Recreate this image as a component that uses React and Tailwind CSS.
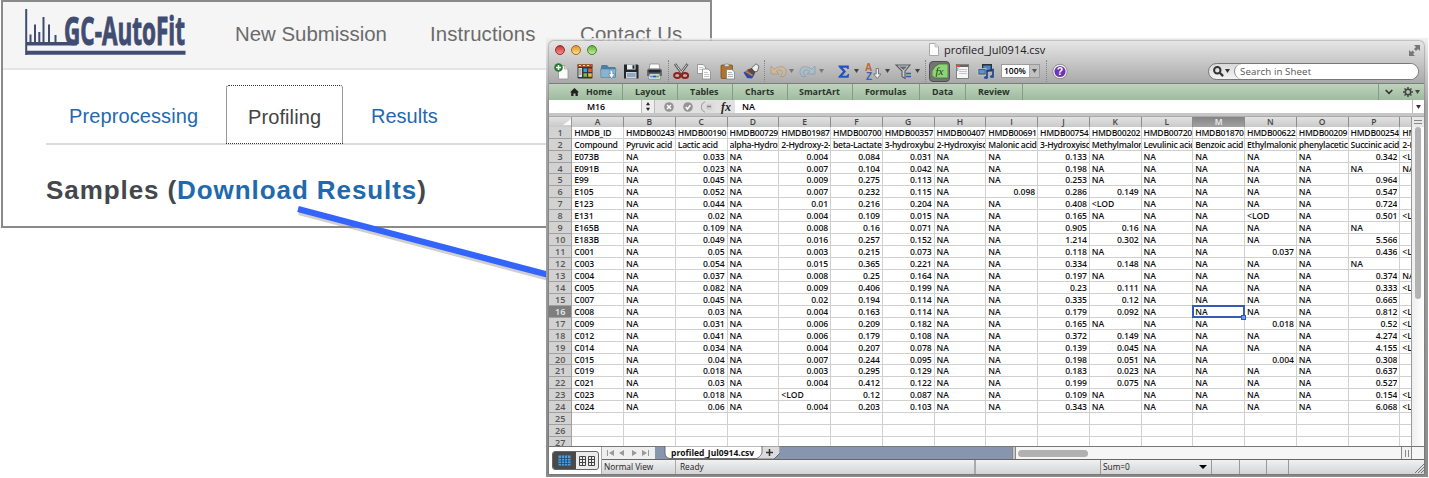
import React from "react";

const COLS = "ABCDEFGHIJKLMNOP".split("");
const IDS = ["HMDB_ID", "HMDB00243", "HMDB00190", "HMDB00729", "HMDB01987", "HMDB00700", "HMDB00357", "HMDB00407", "HMDB00691", "HMDB00754", "HMDB00202", "HMDB00720", "HMDB01870", "HMDB00622", "HMDB00209", "HMDB00254", "HM"];
const NAMES = ["Compound", "Pyruvic acid", "Lactic acid", "alpha-Hydrox", "2-Hydroxy-2-", "beta-Lactate", "3-hydroxybut", "2-Hydroxyisc", "Malonic acid", "3-Hydroxyisc", "Methylmalon", "Levulinic acid", "Benzoic acid", "Ethylmalonic", "phenylacetic", "Succinic acid", "2-H"];

// id, C, E, F, G, I, J, K, N, P, Q
const DATA = `E073B 0.033 0.004 0.084 0.031 NA 0.133 NA NA 0.342 <LOD
E091B 0.023 0.007 0.104 0.042 NA 0.198 NA NA NA NA
E99 0.045 0.009 0.275 0.113 NA 0.253 NA NA 0.964 _
E105 0.052 0.007 0.232 0.115 0.098 0.286 0.149 NA 0.547 _
E123 0.044 0.01 0.216 0.204 NA 0.408 <LOD NA 0.724 _
E131 0.02 0.004 0.109 0.015 NA 0.165 NA <LOD 0.501 <LOD
E165B 0.109 0.008 0.16 0.071 NA 0.905 0.16 NA NA _
E183B 0.049 0.016 0.257 0.152 NA 1.214 0.302 NA 5.566 _
C001 0.05 0.003 0.215 0.073 NA 0.118 NA 0.037 0.436 <LOD
C003 0.054 0.015 0.365 0.221 NA 0.334 0.148 NA NA _
C004 0.037 0.008 0.25 0.164 NA 0.197 NA NA 0.374 NA
C005 0.082 0.009 0.406 0.199 NA 0.23 0.111 NA 0.333 <LOD
C007 0.045 0.02 0.194 0.114 NA 0.335 0.12 NA 0.665 _
C008 0.03 0.004 0.163 0.114 NA 0.179 0.092 NA 0.812 <LOD
C009 0.031 0.006 0.209 0.182 NA 0.165 NA 0.018 0.52 <LOD
C012 0.041 0.006 0.179 0.108 NA 0.372 0.149 NA 4.274 <LOD
C014 0.034 0.004 0.207 0.078 NA 0.139 0.045 NA 4.155 <LOD
C015 0.04 0.007 0.244 0.095 NA 0.198 0.051 0.004 0.308 _
C019 0.018 0.003 0.295 0.129 NA 0.183 0.023 NA 0.637 _
C021 0.03 0.004 0.412 0.122 NA 0.199 0.075 NA 0.527 _
C023 0.018 <LOD 0.12 0.087 NA 0.109 NA NA 0.154 <LOD
C024 0.06 0.004 0.203 0.103 NA 0.343 NA NA 6.068 <LOD`
  .split("\n")
  .map((line) => {
    const [id, c, e, f, g, i, j, k, n, p, q] = line.split(" ");
    return [id, "NA", c, "NA", e, f, g, "NA", i, j, k, "NA", "NA", n, "NA", p, q === "_" ? "" : q];
  });

const EMPTY = Array(17).fill("");
const ROWS = [IDS, NAMES, ...DATA, EMPTY, EMPTY, EMPTY];

function Logo() {
  return (
    <svg className="block h-[50px] w-[166px]" viewBox="22 7 166 50" role="img">
      <g fill="#414c73">
        <path d="M25.2 9h2v46h-2z" />
        <path d="M27 50.800h158.500v4H27z" />
        <path d="M27 42h50v3.500H27z" />
        <path d="M29.500 34.500h2v9h-2zM34 24.500h2v19h-2zM38.300 32h2v11h-2zM42.500 17h2v26h-2zM48 24.500h2v19h-2zM54.500 35h2v9h-2z" />
      </g>
      <text x="64" y="45" textLength="121" lengthAdjust="spacingAndGlyphs" fill="#414c73" stroke="#414c73" strokeWidth="1" fontSize="39" fontWeight="700" fontFamily="'Open Sans', sans-serif">GC-AutoFit</text>
    </svg>
  );
}

function SitePanel() {
  return (
    <div className="absolute left-px top-0 flex h-[228px] w-[711px] flex-col border-2 border-[#8a8a8a] bg-white font-['Liberation_Sans',sans-serif]">
      <header className="flex h-[68px] shrink-0 items-start border-b-2 border-[#e4e4e4] bg-[#f5f5f5] text-[#6b6b6b]">
        <div className="ml-[19px] mt-[5px] w-[166px] shrink-0"><Logo /></div>
        <nav className="mt-[16px] flex whitespace-nowrap pl-[47px] text-[20.4px] leading-[32px]">
          <a className="w-[195px]">New Submission</a>
          <a className="w-[150px] tracking-[0.1px]">Instructions</a>
          <a className="tracking-[0.15px]">Contact Us</a>
        </nav>
      </header>
      <div className="ml-[43px] mt-[15px] flex h-[60px] shrink-0 items-end border-b-2 border-[#dcdcdc] text-[20px] text-[#1f69b0]">
        <a className="h-[58px] w-[180px] pl-[23px] pt-[14px] leading-[34px] tracking-[0.1px]">Preprocessing</a>
        <a className="mb-[-1px] h-[59px] w-[117px] rounded-t-[3px] border border-dotted border-[#333] bg-white pl-[21px] pt-[14px] leading-[34px] tracking-[0.1px] text-[#444]">Profiling</a>
        <a className="h-[58px] pl-[28px] pt-[14px] leading-[34px]">Results</a>
      </div>
      <h1 className="ml-[43px] mt-[27px] whitespace-nowrap text-[26px] font-bold leading-[36px] tracking-[0.92px] text-[#44474b]">
        Samples (<span className="text-[#1f69ae]">Download Results</span>)
      </h1>
    </div>
  );
}

function Caret({ className = "" }) {
  return (
    <svg className={"h-[4px] w-[5px] shrink-0 " + className} viewBox="0 0 5 4"><path d="M0 0h5L2.500 4z" fill="currentColor" /></svg>
  );
}

function Separator({ className = "" }) {
  return <span className={"h-[22px] w-px shrink-0 border-l border-dotted border-[#858585] " + className} />;
}

function Icon({ className = "", children, fade }) {
  return (
    <svg className={"h-[17px] w-[17px] shrink-0 overflow-visible " + className} viewBox="0 0 17 17" opacity={fade ? 0.55 : 1}>{children}</svg>
  );
}

function Toolbar() {
  return (
    <div className="flex h-[26px] items-center text-[#444]">
      <Icon className="ml-[5px]">
        <path d="M4.500 2.500h6l3.500 3.500v10h-9.500z" fill="#fbfbfb" stroke="#909090" strokeWidth=".8" />
        <path d="M10.500 2.500v3.500H14" fill="#ddd" stroke="#999" strokeWidth=".6" />
        <circle cx="4.500" cy="4.500" r="4.300" fill="#277a2d" /><path d="M4.500 2v5M2 4.500h5" stroke="#fff" strokeWidth="1.600" />
      </Icon>
      <Icon className="ml-[6px]">
        <rect x=".5" y="1" width="15" height="14.500" rx="1" fill="#34383c" />
        <rect x=".5" y="1" width="15" height="3" fill="#9b5a33" /><path d="M2 2.500h2M6 2.500h2M10 2.500h2" stroke="#f4d9a4" />
        <path d="M1.500 5h3.500v9H1.500z" fill="#d9dde0" /><path d="M2 7h2.500M2 9h2.500M2 11h2.500" stroke="#666" strokeWidth=".7" />
        <path d="M6.500 5.500h3.500v3.500H6.500z" fill="#27a5ee" /><path d="M11.200 5.500h3.500v3.500h-3.500z" fill="#ef5b2a" /><path d="M6.500 10.300h3.500v3.500H6.500z" fill="#70c43c" /><path d="M11.200 10.300h3.500v3.500h-3.500z" fill="#f0be31" />
      </Icon>
      <Icon className="ml-[6px]">
        <path d="M1 14V3l1-1h5l1.500 2H15l.8 1v9z" fill="#4c7fa3" /><path d="M.5 6h15.500l-.8 8.500H1z" fill="#87b4d2" stroke="#4d7c9c" strokeWidth=".6" />
        <path d="M9.500 7c3 0 3.500 2 3.300 4h2L11.500 15.500 8.500 11h1.800c0-1.500 0-3-.8-4z" fill="#f7f9fb" stroke="#4d708a" strokeWidth=".5" />
      </Icon>
      <Icon className="ml-[6px]">
        <path d="M1 1.500h13.500l1 1v13H1z" fill="#23272b" /><path d="M4 1.500h8.500v5H4z" fill="#e8edf0" /><path d="M9.500 2.300h2v3.500h-2z" fill="#24282c" /><path d="M3 9h10.500v6.500H3z" fill="#c5d5e4" /><path d="M4 11h8.500M4 13h8.500" stroke="#65788b" />
      </Icon>
      <Icon className="ml-[6px]">
        <path d="M4 1h9l1 6H3z" fill="#fafafa" stroke="#777" strokeWidth=".6" /><path d="M1 7l2-1.500h11L16 7v6H1z" fill="#66696d" /><path d="M2.500 7h12v2.500h-12z" fill="#25272a" />
        <path d="M3.500 11h10l1 5H2.500z" fill="#f4f7fa" stroke="#666" strokeWidth=".5" /><path d="M4 13.500h3" stroke="#43a4d6" strokeWidth="2" /><path d="M7 13.500h3" stroke="#275eb4" strokeWidth="2" /><path d="M10 13.500h3" stroke="#62af56" strokeWidth="2" />
      </Icon>
      <Separator className="ml-[5px]" />
      <Icon className="ml-[4px]">
        <path d="M2 1l7 9.500M14.500 1l-7 9.500" stroke="#555" strokeWidth="2.600" /><path d="M2.500 1.500l6 8M14 1.500l-6 8" stroke="#e4e4e4" strokeWidth=".9" />
        <ellipse cx="4.200" cy="12.500" rx="3.100" ry="2.500" fill="none" stroke="#902119" strokeWidth="2" /><ellipse cx="12" cy="12.500" rx="3.100" ry="2.500" fill="none" stroke="#902119" strokeWidth="2" />
      </Icon>
      <Icon className="ml-[6px]">
        <path d="M1.500 1.500h5.500l2.500 2.500v6.500h-8z" fill="#fafafa" stroke="#888" strokeWidth=".8" /><path d="M3 4.500h4M3 6.500h4" stroke="#bbb" strokeWidth=".7" />
        <path d="M6.500 6h5.500l2.500 2.500v7.500h-8z" fill="#fff" stroke="#888" strokeWidth=".8" /><path d="M8 9.500h4M8 11.500h5M8 13.500h5" stroke="#aaa" strokeWidth=".7" />
      </Icon>
      <Icon className="ml-[7px]">
        <rect x="1" y="2" width="11.500" height="13.500" rx="1" fill="#af742e" stroke="#744516" strokeWidth=".7" /><path d="M4 3.500l1-2.500h3.500l1 2.500z" fill="#ddd" stroke="#666" strokeWidth=".5" />
        <path d="M6.500 6.500h5.500l2.500 2.500v7h-8z" fill="#f6f7f8" stroke="#777" strokeWidth=".7" /><path d="M8 9.500h4M8 11.500h5M8 13.500h5" stroke="#999" strokeWidth=".7" />
      </Icon>
      <Icon className="ml-[6px]">
        <path d="M8.500 5L13 .8l3 2.400-1.500 5-4 1z" fill="#eceff1" stroke="#606060" strokeWidth=".9" /><path d="M3.500 7l5-2 4 4-1.500 3z" fill="#5a4b3a" /><path d="M.5 9.500L4 7.500l7.500 4L9 15.500l-5-.5z" fill="#2b4aa8" /><path d="M3 8.500l6.500 4" stroke="#d7782e" strokeWidth="1.800" />
      </Icon>
      <Separator className="ml-[4px]" />
      <Icon className="ml-[5px]" fade>
        <path d="M1 3v8h8L6.300 8.300C9.500 5.800 13 7 12.500 10.500L10.500 13.500h3.500c3.500-4 2.500-10-3-9.800-2.500 0-4.800 1-6.800 2.800z" fill="#dfb985" stroke="#a47b4b" strokeWidth=".8" />
      </Icon>
      <Caret className="ml-[2px] text-[#777]" />
      <Icon className="ml-[5px]" fade>
        <path d="M16 3v8H8l2.700-2.700C7.500 5.800 4 7 4.500 10.500L6.500 13.500H3C-.5 9.500.5 3.500 6 3.700c2.500 0 4.800 1 6.800 2.800z" fill="#9ec2d9" stroke="#6389a4" strokeWidth=".8" />
      </Icon>
      <Caret className="ml-[3px] text-[#777]" />
      <Icon className="ml-[13px]">
        <path d="M1.500 2.500h10.300v3.500h-1.500c-.3-1-.7-1.300-1.500-1.300H5.700l3.300 3.800-3.700 4.200h3.700c1 0 1.500-.8 1.800-1.700h1.300l-.5 3.800H1.500v-1.300L6 8.500 1.500 3.800z" fill="#2452c5" />
      </Icon>
      <Caret />
      <Icon className="ml-[6px]">
        <text x="0" y="8" fontSize="10" fontWeight="700" fill="#be6634" fontFamily="'Liberation Sans', sans-serif">A</text><text x="1" y="16.500" fontSize="10" fontWeight="700" fill="#3e64af" fontFamily="'Liberation Sans', sans-serif">Z</text>
        <path d="M11.200 5.500h2.300v5.500h2.500l-3.700 4.500-3.700-4.500h2.600z" fill="#eee" stroke="#666" strokeWidth=".8" />
      </Icon>
      <Caret className="ml-[3px]" />
      <Icon className="ml-[5px]">
        <path d="M1 2h14l-5 6v7.500l-3-2V8z" fill="#c9cccf" stroke="#565a5e" strokeWidth="1.100" /><path d="M4 3.500h8L8.500 7z" fill="#656a6e" /><path d="M11 10.500h5M11 13.500h5" stroke="#2d60b5" strokeWidth="1.500" />
      </Icon>
      <Caret className="ml-[3px]" />
      <Separator className="ml-[5px]" />
      <span className="ml-[3px] flex h-[21px] w-[21px] shrink-0 items-center justify-center rounded-[4px] border border-[#4e4e4e] bg-[#747474]">
        <svg className="h-[16px] w-[16px]" viewBox="0 0 16 16"><path d="M0 8l3-4.500L7 1h9v14H3L0 13z" fill="#8ed377" stroke="#3b6a2e" strokeWidth=".7" /><text x="3.500" y="11.500" fontSize="11" fontStyle="italic" fill="#1f3f18" fontFamily="'Liberation Serif', serif">fx</text></svg>
      </span>
      <Icon className="ml-[5px]">
        <rect x="1.500" y="1.500" width="12" height="14" fill="#f6f6f6" stroke="#6b6b6b" strokeWidth=".8" /><path d="M1.500 3h12" stroke="#666" strokeWidth="2" /><path d="M1.500 3h3.500" stroke="#d45038" strokeWidth="2.500" /><path d="M4 6.500h8M4 8.500h8M4 10.500h8" stroke="#b4bac0" strokeWidth=".8" /><path d="M2.800 5v3" stroke="#43a4d6" />
      </Icon>
      <Icon className="ml-[6px]">
        <rect x="4" y="1" width="10" height="7.500" fill="#2a3138" /><rect x="5.300" y="2.500" width="7.300" height="4.500" fill="#4a86c7" /><rect x="0" y="5.500" width="8" height="6.500" fill="#47525e" stroke="#d2d8df" strokeWidth=".7" /><rect x="1.200" y="6.800" width="5.500" height="3.800" fill="#5297d3" />
        <path d="M9 14.500V8l6-1.500V13" fill="none" stroke="#1b3b80" strokeWidth="1.600" /><ellipse cx="8" cy="14.500" rx="2" ry="1.600" fill="#2551a3" /><ellipse cx="14" cy="13.500" rx="2" ry="1.600" fill="#2551a3" />
      </Icon>
      <span className="ml-[6px] flex h-[14px] w-[39px] shrink-0 items-center border border-[#9b9b9b] bg-white text-[8.5px] font-semibold text-black">
        <span className="w-[27px] pl-[2px]">100%</span>
        <span className="flex h-full flex-1 items-center justify-center border-l border-[#aaa] bg-[#c1c1c1]"><Caret className="text-[#555]" /></span>
      </span>
      <Separator className="ml-[6px]" />
      <Icon className="ml-[5px]">
        <circle cx="8" cy="8.500" r="7.200" fill="#fafafa" stroke="#777" strokeWidth=".8" /><circle cx="8" cy="8.500" r="5.600" fill="#6f34b5" /><text x="8" y="12.200" textAnchor="middle" fontSize="10.500" fontWeight="700" fill="#fff" fontFamily="'Liberation Sans', sans-serif">?</text>
      </Icon>
      <div className="ml-auto mr-[5px] flex h-[17px] w-[211px] items-center rounded-full border border-[#777] bg-gradient-to-b from-[#d9d9d9] to-[#f3f3f3]">
        <svg className="ml-[4px] h-[11px] w-[11px]" viewBox="0 0 11 11"><circle cx="4.300" cy="4.300" r="3.200" fill="none" stroke="#333" strokeWidth="2" /><path d="M6.800 6.800l3.300 3.300" stroke="#333" strokeWidth="2.200" /></svg>
        <Caret className="ml-[1px] text-[#333]" />
        <span className="ml-[4px] h-full flex-1 rounded-full border-l border-[#888] bg-white pl-[5px] font-['Open_Sans'] text-[9.7px] leading-[15px] tracking-[0.1px] text-[#555]">Search in Sheet</span>
      </div>
    </div>
  );
}

function Light({ className }) {
  return <span className={"h-[10px] w-[10px] rounded-full border " + className} />;
}

function TitleBar() {
  return (
    <div className="h-[43px] shrink-0 rounded-t-[4px] border-b border-[#7c7c7c] bg-gradient-to-b from-[#e6e6e6] to-[#a9a9a9]">
      <div className="flex h-[17px] items-center">
        <span className="ml-[6px] flex gap-[6px]">
          <Light className="border-[#8d3031] bg-gradient-to-b from-[#c4353b] to-[#fa8d86]" />
          <Light className="border-[#a06720] bg-gradient-to-b from-[#dd9231] to-[#ffe07b]" />
          <Light className="border-[#497f2f] bg-gradient-to-b from-[#65ad43] to-[#c2f295]" />
        </span>
        <svg className="ml-[332px] h-[13px] w-[10px]" viewBox="0 0 10 13"><path d="M.5.5h5.500l3.500 3.500v8.500h-9z" fill="#fff" stroke="#999" strokeWidth=".8" /><path d="M6 .5V4h3.500" fill="#ddd" stroke="#aaa" strokeWidth=".6" /></svg>
        <span className="ml-[5px] whitespace-nowrap font-['Open_Sans'] text-[11px] leading-[17px] text-[#222]">profiled_Jul0914.csv</span>
        <svg className="ml-auto mr-[4px] mt-[2px] h-[11px] w-[11px]" viewBox="0 0 11 11" fill="#777"><path d="M5 0h6v6L9 4 7 6 5 4l2-2zM0 5l2 2 1.500-1.500 2 2L4 9l2 2H0z" /></svg>
      </div>
      <Toolbar />
    </div>
  );
}

const RIBBON = [
  ["Home", "w-[74px] pl-[37px]"], ["Layout", "w-[55px] pl-[12px]"], ["Tables", "w-[55px] pl-[12px]"], ["Charts", "w-[55px] pl-[12px]"],
  ["SmartArt", "w-[65px] pl-[11px]"], ["Formulas", "w-[67px] pl-[12px]"], ["Data", "w-[46px] pl-[12px]"], ["Review", "w-[57px] pl-[12px]"],
];

function Ribbon() {
  return (
    <div className="relative flex h-[16px] shrink-0 items-stretch bg-gradient-to-b from-[#bfd3bd] to-[#9ebb9e] text-[8.9px] font-bold leading-[16px] text-[#2c332c]">
      <svg className="absolute left-[21px] top-[4px] h-[8px] w-[9px]" viewBox="0 0 9 8"><path d="M4.500 0L9 4.300H7.800V8H5.500V5.500h-2V8H1.200V4.300H0z" fill="#222" /></svg>
      {RIBBON.map(([label, cls]) => (
        <span key={label} className={"shrink-0 whitespace-nowrap border-r border-[#829e82] " + cls}>{label}</span>
      ))}
      <span className="ml-auto flex w-[46px] items-center border-l border-[#829e82] pl-[6px] text-[#444]">
        <svg className="h-[6px] w-[8px]" viewBox="0 0 8 6"><path d="M.7 1L4 4.300 7.300 1" fill="none" stroke="#333" strokeWidth="1.600" /></svg>
        <svg className="ml-[10px] h-[10px] w-[10px]" viewBox="0 0 10 10"><circle cx="5" cy="5" r="2.700" fill="none" stroke="#444" strokeWidth="1.500" /><path d="M5 0v2M5 8v2M0 5h2M8 5h2M1.500 1.500l1.300 1.300M7.200 7.200l1.300 1.300M1.500 8.500l1.300-1.300M7.200 2.800l1.300-1.300" stroke="#444" strokeWidth="1.400" /></svg>
        <Caret className="ml-[2px]" />
      </span>
    </div>
  );
}

function FormulaBar() {
  return (
    <div className="flex h-[17px] shrink-0 items-start border-b border-[#aaa] bg-[#c6c6c6]">
      <span className="h-[13px] w-[92px] bg-white pl-[2px] text-center text-[8.8px] font-semibold leading-[15px] text-black">M16</span>
      <span className="flex h-[13px] w-[94px] items-center bg-[#e1e1e1]">
        <span className="flex h-full w-[14px] items-center justify-center border-x border-[#bbb] bg-[#eee]">
          <svg className="h-[9px] w-[4px]" viewBox="0 0 4 9"><path d="M2 0l2 3.200H0zM2 9L0 5.800h4z" fill="#222" /></svg>
        </span>
        <svg className="ml-[9px] h-[10px] w-[10px]" viewBox="0 0 10 10"><circle cx="5" cy="5" r="4.800" fill="#949494" /><path d="M3 3l4 4M7 3L3 7" stroke="#fff" strokeWidth="1.500" /></svg>
        <svg className="ml-[9px] h-[10px] w-[10px]" viewBox="0 0 10 10"><circle cx="5" cy="5" r="4.800" fill="#949494" /><path d="M2.700 5l1.700 2 3-3.700" fill="none" stroke="#fff" strokeWidth="1.500" /></svg>
        <svg className="ml-[8px] h-[12px] w-[14px]" viewBox="0 0 14 12"><path d="M14 .5H6a5.500 5.500 0 000 11h8" fill="#ddd" /><path d="M4 .7a5.600 5.600 0 000 10.600" fill="none" stroke="#999" /><circle cx="8" cy="6" r="3.200" fill="#d1d1d1" /><path d="M6 5.500h4" stroke="#888" strokeWidth="1.300" /></svg>
        <span className="ml-[6px] font-['Liberation_Serif',serif] text-[12px] font-bold italic leading-[12px] text-[#222]">fx</span>
      </span>
      <span className="h-[13px] flex-1 bg-white pl-[7px] text-[9px] font-semibold leading-[14px] text-black">NA</span>
      <span className="flex h-[13px] w-[12px] items-center justify-center border-l border-[#bbb] bg-white text-[#333]"><Caret /></span>
    </div>
  );
}

function Cell({ value, last, selected }) {
  const numeric = /^\d+\.\d+$/.test(value);
  return (
    <span className={"relative h-full shrink-0 border-r border-[#d0d0d0] " + (last ? "w-[12px] " : "w-[51.75px] ") + (numeric ? "pr-[2px] text-right" : "pl-[2px] text-left")}>
      <span className="block h-full overflow-hidden whitespace-nowrap">{value}</span>
      {selected && (
        <span className="absolute -left-[1.500px] -top-[1px] z-10 h-[13px] w-[53px] border-2 border-[#325cb5]">
          <span className="absolute -bottom-[4px] -right-[3px] h-[5px] w-[5px] border border-[#2b58c0] bg-[#6d9fee]" />
        </span>
      )}
    </span>
  );
}

function Sheet() {
  return (
    <div className="flex h-[329px] shrink-0">
      <div className="flex w-[862px] flex-col overflow-hidden bg-white">
        <div className="flex h-[9.7px] shrink-0 bg-gradient-to-b from-[#e2e2e2] to-[#c9c9c9] text-[8.5px] font-semibold leading-[9.500px] text-[#444]">
          <span className="flex w-[23.3px] shrink-0 justify-end border-r border-[#999] pt-[2px]">
            <svg className="h-[6px] w-[8px]" viewBox="0 0 8 6"><path d="M8 0v6H0z" fill="#fafafa" /></svg>
          </span>
          {COLS.map((c) => (
            <span key={c} className={"w-[51.75px] shrink-0 border-r border-[#8d8d8d] text-center " + (c === "M" ? "bg-gradient-to-b from-[#848484] to-[#a2a2a2] text-[#eee]" : "")}>{c}</span>
          ))}
          <span className="flex-1" />
        </div>
        {ROWS.map((row, r) => (
          <div key={r} className="flex h-[11.95px] shrink-0">
            <span className={"w-[23.3px] shrink-0 border-b border-r border-[#a0a0a0] text-center text-[9px] font-semibold leading-[12px] " + (r === 15 ? "bg-[#7e7e7e] text-[#eee]" : "bg-[#d2d2d2] text-[#555]")}>{r + 1}</span>
            <span className={"flex flex-1 border-b border-[#d0d0d0] text-[8.6px] font-semibold leading-[12px] text-[#111] " + (r === 0 ? "tracking-[-0.28px]" : r === 1 ? "tracking-[-0.3px]" : "tracking-[-0.08px]")}>
              {row.map((v, c) => <Cell key={c} value={v} last={c === 16} selected={r === 15 && c === 12} />)}
            </span>
          </div>
        ))}
      </div>
      <div className="flex w-[13px] flex-col items-center border-l border-[#9a9a9a] bg-gradient-to-r from-[#eee] to-white">
        <span className="flex h-[10px] w-full flex-col items-center justify-center gap-[2px] bg-[#e8e8e8]">
          <span className="h-px w-[8px] bg-[#888]" /><span className="h-px w-[8px] bg-[#888]" />
        </span>
        <span className="h-[172px] w-[6px] rounded-full bg-[#b2b2b2]" />
      </div>
    </div>
  );
}

function Footer() {
  return (
    <div className="flex h-[28px] shrink-0 border-t border-[#777] bg-[#e4e4e4] text-[8.3px] font-medium text-[#222]">
      <div className="flex w-[53px] shrink-0 items-center border-r border-[#aaa] bg-white pl-[3px]">
        <span className="flex h-[19px] w-[47px] overflow-hidden rounded-[3px] border border-[#666] bg-[#ebebeb]">
          <span className="flex w-[23px] items-center justify-center bg-[#4a4a4a]">
            <svg className="h-[11px] w-[13px]" viewBox="0 0 13 11"><path d="M.5.5h12v10H.5z" fill="#4f9fe0" /><path d="M.5 3.500h12M.5 6h12M.5 8.500h12M3.500.5v10M6.500.5v10M9.500.5v10" stroke="#20486c" strokeWidth=".8" /></svg>
          </span>
          <span className="flex flex-1 items-center justify-center gap-[2px]">
            {[0, 1].map((i) => <svg key={i} className="h-[10px] w-[7px]" viewBox="0 0 7 10"><path d="M.5.5h6v9h-6z" fill="#eee" stroke="#444" /><path d="M1 3.500h5M1 6.500h5M3.500 1v8" stroke="#444" /></svg>)}
          </span>
        </span>
      </div>
      <div className="flex min-w-0 flex-1 flex-col">
        <div className="flex h-[13px] shrink-0 border-b border-[#666] bg-[#8795ae]">
          <span className="flex w-[53px] items-center bg-[#efefef] pl-[5px]">
            <svg className="h-[6px] w-[43px]" viewBox="0 0 43 6" fill="#999"><path d="M0 0h1v6H0zM7 0v6L2 3zM17 0v6l-5-3zM25 0l5 3-5 3zM35 0l5 3-5 3zM41 0h1v6h-1z" /></svg>
          </span>
          <span className="relative flex w-[125px] shrink-0 overflow-visible">
            <svg className="absolute left-[8px] top-[-1px] h-[13px] w-[117px]" viewBox="0 0 117 13"><path d="M97 0h20v7l-6 6H93z" fill="#dcdcdc" stroke="#555" strokeWidth=".8" /><path d="M2 0h97v6c0 3-4 6.500-6 6.500H7C4 12.500 2 10 2 7z" fill="#fff" stroke="#555" strokeWidth=".8" /></svg>
            <span className="relative w-[104px] pl-[16px] text-[8.5px] font-bold leading-[11px] text-[#111]">profiled_Jul0914.csv</span>
            <svg className="relative ml-[7px] mt-[2px] h-[7px] w-[7px]" viewBox="0 0 7 7"><path d="M3.500 0v7M0 3.500h7" stroke="#333" strokeWidth="1.500" /></svg>
          </span>
          <span className="ml-auto flex w-[412px] shrink-0 items-center bg-[#f6f6f6]">
            <span className="h-full w-[4px] border-x border-[#888] bg-[#c6c6c6]" />
            <span className="ml-[2px] h-[7px] w-[70px] rounded-full bg-[#b1b1b1]" />
            <span className="ml-auto mr-[12px] flex h-full w-[11px] items-center justify-center gap-[2px] border-x border-[#888] bg-[#f1f1f1]"><span className="h-[7px] w-px bg-[#888]" /><span className="h-[7px] w-px bg-[#888]" /></span>
          </span>
        </div>
        <div className="flex h-[14px] items-stretch bg-gradient-to-b from-[#f1f1f1] to-[#d2d4d6] leading-[14px]">
          <span className="w-[74px] border-r border-[#aaa] pl-[2px]">Normal View</span>
          <span className="w-[300px] border-r-2 border-[#aaa] pl-[4px]">Ready</span>
          <span className="w-[125px] border-r border-[#999]" />
          <span className="flex w-[111px] items-center border-r border-[#999] pl-[2px]">Sum=0<svg className="ml-auto mr-[4px] h-[4px] w-[8px]" viewBox="0 0 8 4"><path d="M0 0h8L4 4z" /></svg></span>
          <span className="w-[28px] border-r border-[#999]" />
          <span className="w-[27px] border-r border-[#999]" />
          <span className="w-[22px] border-r border-[#999]" />
          <svg className="ml-auto mt-[4px] h-[9px] w-[9px]" viewBox="0 0 9 9"><path d="M0 9l9-9M3 9l6-6M6 9l3-3" stroke="#777" /></svg>
        </div>
      </div>
    </div>
  );
}

export default function App() {
  return (
    <div className="relative h-[478px] w-[1429px] overflow-hidden bg-white">
      <SitePanel />
      <svg className="absolute left-[290px] top-[200px] h-[90px] w-[270px]" viewBox="290 200 270 90">
        <path d="M299 212L553 279" stroke="#888" strokeWidth="6" opacity=".4" />
        <path d="M298 209L553 276" stroke="#3364fb" strokeWidth="6.200" />
      </svg>
      <div className="absolute left-[546px] top-[38px] h-[439px] w-[882px] overflow-hidden bg-gradient-to-b from-[#ededed]/80 via-[#aaaaaa] via-15% to-[#8c8c8c] pl-[3px] pt-[3px]">
        <div className="flex h-[433px] w-[875px] flex-col overflow-hidden rounded-t-[5px] bg-[#ddd] font-['Open_Sans',sans-serif] shadow-[0_0_2px_#444]">
          <TitleBar />
          <Ribbon />
          <FormulaBar />
          <Sheet />
          <Footer />
        </div>
      </div>
    </div>
  );
}
